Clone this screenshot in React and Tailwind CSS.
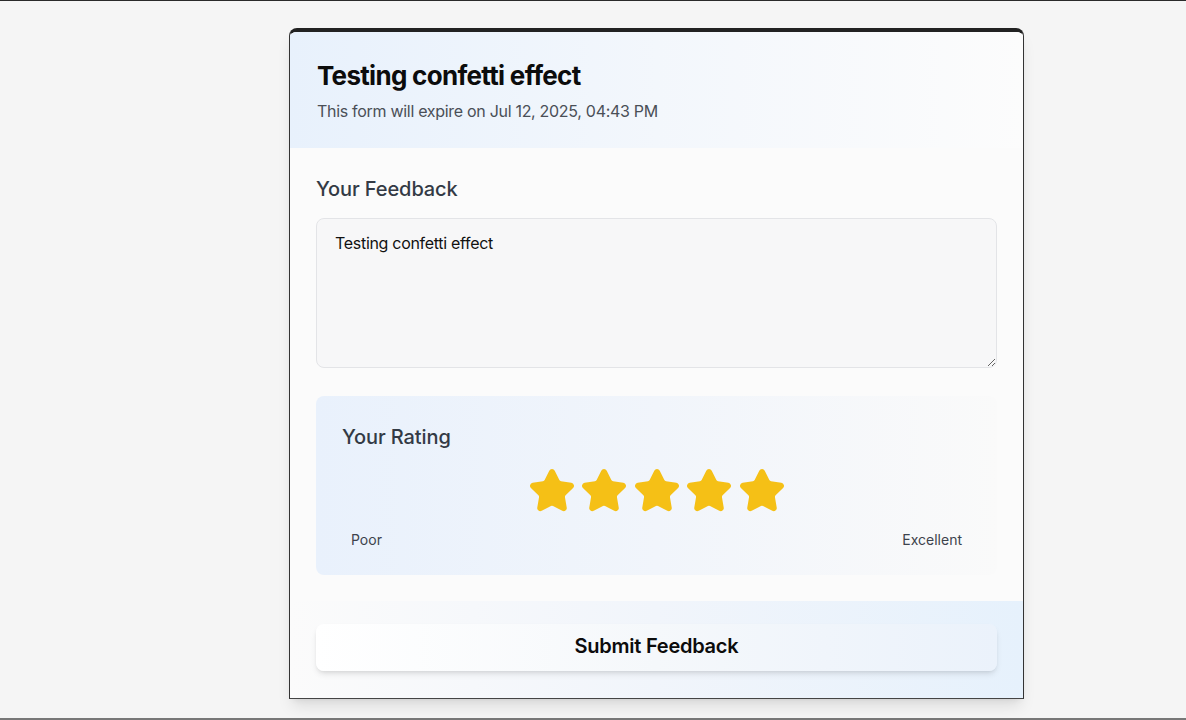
import { Star } from 'lucide-react';

const App = () => {
  return (
    <div className="w-full h-[720px] bg-[#f5f5f5] border-t border-[#2a2a2a] overflow-hidden flex flex-col font-['Inter',sans-serif]">
      <div className="flex-1">
        {/* Card */}
        <div className="ml-[289px] mt-[27px] w-[735px] rounded-t-lg border-t-4 border-x border-b border-x-[#333] border-t-[#222] border-b-[#444] bg-[#fbfbfb] shadow-lg overflow-hidden">
          {/* Header */}
          <div className="h-[116px] px-[27px] pt-[28px] bg-gradient-to-r from-[#e8f1fc] via-[#f3f7fc] to-[#fcfcfc]">
            <h1 className="text-[26px] leading-8 font-bold text-[#0c0c0c] tracking-[-0.7px]">Testing confetti effect</h1>
            <p className="mt-[7px] text-base leading-6 text-[#4a4f57] tracking-[-0.3px]">This form will expire on Jul 12, 2025, 04:43 PM</p>
          </div>

          {/* Body */}
          <div className="px-[26px] pt-[27px] pb-[26px]">
            <h2 className="text-xl leading-7 font-medium text-[#333a45] tracking-[-0.1px]">Your Feedback</h2>
            <textarea
              className="mt-[15px] block w-full h-[150px] resize-y rounded-lg border border-[#e3e4e7] bg-[#f7f7f8] px-[18px] pt-[12px] text-base leading-6 tracking-[-0.3px] text-[#111] outline-none"
              defaultValue="Testing confetti effect"
            />

            {/* Rating */}
            <div className="mt-[28px] h-[179px] rounded-lg bg-gradient-to-r from-[#e9f1fc] via-[#f1f5fb] to-[#fafafa] px-[26px] pt-[27px]">
              <h2 className="text-xl leading-7 font-medium text-[#333a45] tracking-[-0.1px]">Your Rating</h2>
              <div className="mt-[16px] flex justify-center gap-[4.5px]">
                {[0, 1, 2, 3, 4].map((i) => (
                  <Star key={i} size={48} className="text-[#f5c016] fill-[#f5c016]" />
                ))}
              </div>
              <div className="mt-[15px] px-[9px] flex justify-between text-sm leading-5 text-[#3d434c]">
                <span>Poor</span>
                <span>Excellent</span>
              </div>
            </div>
          </div>

          {/* Footer */}
          <div className="h-[97px] px-[26px] pt-[23px] bg-gradient-to-r from-[#fbfbfb] via-[#f1f5fb] to-[#e6f1fc]">
            <button className="w-full h-[47px] pb-[4px] rounded-lg bg-gradient-to-r from-[#ffffff] via-[#f5f8fb] to-[#ebf2fb] shadow-md text-xl font-semibold tracking-[-0.25px] text-[#0c0c0c]">
              Submit Feedback
            </button>
          </div>
        </div>
      </div>
      <div className="h-[2px] bg-[#777]" />
    </div>
  );
};

export default App;
